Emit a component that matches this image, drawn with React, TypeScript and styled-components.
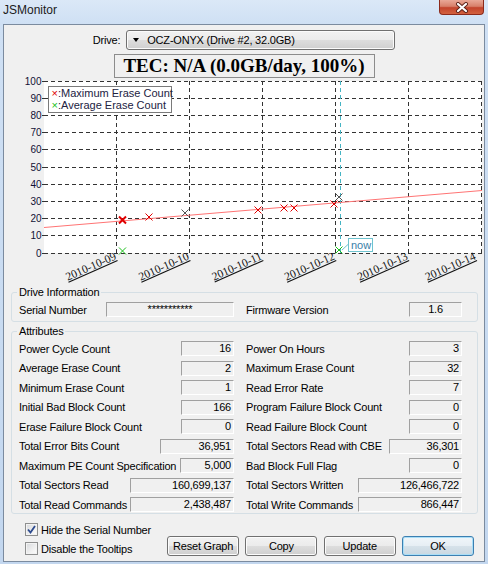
import React from 'react';
import styled, { createGlobalStyle, css } from 'styled-components';

// --------------------------------------------------------------- //
//                         Global / Window                         //
// --------------------------------------------------------------- //

const GlobalStyle = createGlobalStyle`
  html, body {
    margin: 0;
    padding: 0;
  }
  body {
    font-family: "Liberation Sans", Arial, sans-serif;
    background: #c3d7ef;
  }
`;

const Window = styled.div`
  width: 488px;
  height: 564px;
  display: flex;
  flex-direction: column;
  overflow: hidden;
  background: linear-gradient(to bottom, #dbe8f7 0px, #cfe0f4 24px, #c3d7ef 100%);
`;

const TitleBar = styled.div`
  height: 24px;
  flex-shrink: 0;
  display: flex;
  justify-content: space-between;
  align-items: flex-start;
`;

const Title = styled.span`
  padding: 2px 0 0 3px;
  font-size: 12px;
  line-height: 16px;
  color: #1b1b1b;
`;

const CloseButton = styled.div`
  width: 45px;
  height: 15px;
  margin-right: 4px;
  box-sizing: border-box;
  border: 1px solid #8c2a1b;
  border-top: none;
  border-radius: 0 0 4px 4px;
  background: linear-gradient(to bottom, #e9a897 0%, #d8806a 45%, #c3442c 55%, #d2613f 100%);
  display: flex;
  align-items: center;
  justify-content: center;
`;

const Client = styled.div`
  flex: 1;
  margin: 0 3px 2px;
  border: 1px solid #7b8b9f;
  background: #f0f0f0;
  display: flex;
  flex-direction: column;
`;

// --------------------------------------------------------------- //
//                         Header controls                         //
// --------------------------------------------------------------- //

const DriveRow = styled.div`
  margin-top: 5px;
  height: 20px;
  display: flex;
  justify-content: center;
  align-items: center;
  gap: 6px;
`;

const Text = styled.span`
  font-size: 11px;
  letter-spacing: -0.2px;
  color: #000;
  white-space: nowrap;
`;

const Combo = styled.div`
  width: 269px;
  height: 20px;
  box-sizing: border-box;
  border: 1px solid #707070;
  border-radius: 3px;
  background: linear-gradient(to bottom, #f2f2f2 0%, #ebebeb 50%, #dddddd 51%, #cfcfcf 100%);
  box-shadow: inset 0 0 0 1px #fbfbfb;
  display: flex;
  align-items: center;
  gap: 8px;
  padding-left: 6px;
`;

const ComboArrow = styled.span`
  width: 0;
  height: 0;
  border-left: 3.5px solid transparent;
  border-right: 3.5px solid transparent;
  border-top: 4px solid #000;
`;

const TecBox = styled.div`
  width: 261px;
  height: 24px;
  box-sizing: border-box;
  margin: 4px auto 0;
  border: 1px solid #8c8c8c;
  font-family: "Liberation Serif", "Times New Roman", serif;
  font-weight: bold;
  font-size: 19px;
  line-height: 22px;
  text-align: center;
  color: #000;
`;

// --------------------------------------------------------------- //
//                              Chart                              //
// --------------------------------------------------------------- //

const ChartSvg = styled.svg`
  display: block;
  flex-shrink: 0;
  margin-top: -5px;
`;

const AxisText = styled.text`
  font-family: "Liberation Sans", Arial, sans-serif;
  font-size: 10px;
  fill: #101035;
`;

const LegendText = styled.text`
  font-family: "Liberation Sans", Arial, sans-serif;
  font-size: 11px;
  fill: #22223f;
`;

const DateText = styled.text`
  font-family: "Liberation Serif", "Times New Roman", serif;
  font-size: 11.5px;
  fill: #111;
  text-decoration: underline;
`;

const OFF = 5;
const PLOT_LEFT = 40;
const PLOT_RIGHT = 478;
const PLOT_TOP = 3 + OFF;
const PLOT_BOTTOM = 175 + OFF;
const DAY_W = 72.9;

const dayX = (d: number) => PLOT_LEFT + d * DAY_W;
const valY = (v: number) => PLOT_BOTTOM - v * ((PLOT_BOTTOM - PLOT_TOP) / 100);
const crisp = (n: number) => Math.floor(n) + 0.5;

const maxMarks = [
  { x: 118.5, y: 142, bold: true },
  { x: 145, y: 139 },
  { x: 181, y: 135, dim: true },
  { x: 254, y: 132 },
  { x: 280, y: 130 },
  { x: 290, y: 130 },
  { x: 330, y: 126 },
  { x: 335, y: 119, dim: true },
];

const avgMarks = [
  { x: 118.5, y: 173 },
  { x: 335, y: 172 },
];

const Cross = ({ x, y, color, w = 1 }: { x: number; y: number; color: string; w?: number }) => (
  <path
    d={`M${x - 3.5} ${y - 3.5}L${x + 3.5} ${y + 3.5}M${x + 3.5} ${y - 3.5}L${x - 3.5} ${y + 3.5}`}
    stroke={color}
    strokeWidth={w}
    fill="none"
  />
);

const Chart = () => {
  const values = Array.from({ length: 11 }, (_, i) => i * 10);
  const days = [1, 2, 3, 4, 5, 6];
  return (
    <ChartSvg width={480} height={208 + OFF}>
      <rect x={PLOT_LEFT} y={PLOT_TOP} width={PLOT_RIGHT - PLOT_LEFT} height={PLOT_BOTTOM - PLOT_TOP} fill="#fff" />

      {values.map((v) => (
        <g key={v}>
          <line
            x1={PLOT_LEFT}
            x2={PLOT_RIGHT}
            y1={crisp(valY(v))}
            y2={crisp(valY(v))}
            stroke="#333"
            strokeDasharray="4 3"
          />
          <line x1={38} x2={PLOT_LEFT} y1={crisp(valY(v))} y2={crisp(valY(v))} stroke="#333" />
          <AxisText x={37.5} y={valY(v) + 3.5} textAnchor="end">{v}</AxisText>
        </g>
      ))}

      {days.map((d) => (
        <line
          key={d}
          x1={crisp(dayX(d))}
          x2={crisp(dayX(d))}
          y1={PLOT_TOP}
          y2={PLOT_BOTTOM}
          stroke="#333"
          strokeDasharray="4 3"
        />
      ))}

      {days.map((d) => (
        <DateText
          key={d}
          textAnchor="end"
          transform={`translate(${dayX(d) - (d === 6 ? 5 : 0)} ${181 + OFF}) rotate(-24)`}
        >
          {`2010-10-${String(8 + d).padStart(2, '0')}`}
        </DateText>
      ))}

      <line x1={336.5} x2={336.5} y1={PLOT_TOP} y2={PLOT_BOTTOM} stroke="#44b4c4" strokeDasharray="4 3" />

      <line x1={PLOT_LEFT} y1={149.5 + OFF} x2={PLOT_RIGHT} y2={112.5 + OFF} stroke="#ff7474" />

      {maxMarks.map((m) => (
        <Cross key={`${m.x}-${m.y}`} x={m.x} y={m.y + OFF} color={m.dim ? '#555' : '#e00000'} w={m.bold ? 2 : 1} />
      ))}
      {avgMarks.map((m) => (
        <Cross key={`${m.x}-${m.y}`} x={m.x} y={m.y + OFF} color="#18c018" />
      ))}

      <line x1={338} y1={172 + OFF} x2={344.5} y2={166 + OFF} stroke="#6ec3cf" />
      <rect x={344.5} y={160.5 + OFF} width={24} height={13} fill="#fff" stroke="#6ec3cf" />
      <LegendText x={347} y={171 + OFF} style={{ fill: '#3b7fa8' }}>now</LegendText>

      <rect x={44.5} y={8.5 + OFF} width={123} height={26} fill="#fff" stroke="#7a7a7a" />
      <LegendText x={47.5} y={19 + OFF}>
        <tspan fill="#e00000">×</tspan>:Maximum Erase Count
      </LegendText>
      <LegendText x={47.5} y={31 + OFF}>
        <tspan fill="#18c018">×</tspan>:Average Erase Count
      </LegendText>
    </ChartSvg>
  );
};

// --------------------------------------------------------------- //
//                         Group boxes                             //
// --------------------------------------------------------------- //

const Group = styled.fieldset<{ $top: number; $pb: number }>`
  margin: ${(p) => p.$top}px 6px 0 7px;
  padding: 3px 14px ${(p) => p.$pb}px 7px;
  border: 1px solid #d5dfe5;
  border-radius: 3px;
  min-width: 0;
`;

const GroupTitle = styled.legend`
  padding: 0 2px;
  margin-left: -2px;
  font-size: 11px;
  line-height: 13px;
  letter-spacing: -0.2px;
  color: #000;
`;

const Grid = styled.div`
  display: grid;
  grid-template-columns: 215px 216px;
  column-gap: 12px;
  row-gap: 4.5px;
`;

const Cell = styled.div`
  height: 15px;
  display: flex;
  align-items: center;
  justify-content: space-between;
`;

const Field = styled.div<{ $w: number; $center?: boolean }>`
  width: ${(p) => p.$w}px;
  height: 15px;
  box-sizing: border-box;
  border-top: 1px solid #a0a0a0;
  border-left: 1px solid #a0a0a0;
  border-right: 1px solid #fff;
  border-bottom: 1px solid #fff;
  padding: 0 2px;
  font-size: 11px;
  line-height: 13px;
  letter-spacing: -0.2px;
  color: #000;
  white-space: nowrap;
  text-align: ${(p) => (p.$center ? 'center' : 'right')};
`;

interface AttrItem {
  label: string;
  value: string;
  width: number;
}

const attributes: AttrItem[] = [
  { label: 'Power Cycle Count', value: '16', width: 53 },
  { label: 'Power On Hours', value: '3', width: 53 },
  { label: 'Average Erase Count', value: '2', width: 53 },
  { label: 'Maximum Erase Count', value: '32', width: 53 },
  { label: 'Minimum Erase Count', value: '1', width: 53 },
  { label: 'Read Error Rate', value: '7', width: 53 },
  { label: 'Initial Bad Block Count', value: '166', width: 53 },
  { label: 'Program Failure Block Count', value: '0', width: 53 },
  { label: 'Erase Failure Block Count', value: '0', width: 53 },
  { label: 'Read Failure Block Count', value: '0', width: 53 },
  { label: 'Total Error Bits Count', value: '36,951', width: 74 },
  { label: 'Total Sectors Read with CBE', value: '36,301', width: 73 },
  { label: 'Maximum PE Count Specification', value: '5,000', width: 54 },
  { label: 'Bad Block Full Flag', value: '0', width: 53 },
  { label: 'Total Sectors Read', value: '160,699,137', width: 104 },
  { label: 'Total Sectors Written', value: '126,466,722', width: 104 },
  { label: 'Total Read Commands', value: '2,438,487', width: 104 },
  { label: 'Total Write Commands', value: '866,447', width: 104 },
];

// --------------------------------------------------------------- //
//                              Footer                             //
// --------------------------------------------------------------- //

const Footer = styled.div`
  margin: 8px 10px 0 21px;
  display: flex;
  justify-content: space-between;
  align-items: flex-end;
`;

const CheckList = styled.div`
  display: flex;
  flex-direction: column;
  gap: 4px;
`;

const CheckRow = styled.label`
  height: 15px;
  display: flex;
  align-items: center;
  gap: 3px;
`;

const CheckBox = styled.span`
  width: 13px;
  height: 13px;
  box-sizing: border-box;
  border: 1px solid #8e8f8f;
  background: linear-gradient(135deg, #d6d8db 0%, #f4f4f4 70%, #fdfdfd 100%);
  box-shadow: inset 0 0 0 1px #f3f3f3;
  display: flex;
  align-items: center;
  justify-content: center;
`;

const ButtonRow = styled.div`
  display: flex;
  gap: 6.3px;
`;

const Button = styled.button<{ $default?: boolean }>`
  width: 72px;
  height: 20px;
  padding: 0;
  border: 1px solid #707070;
  border-radius: 3px;
  background: linear-gradient(to bottom, #f2f2f2 0%, #ebebeb 50%, #dddddd 51%, #cfcfcf 100%);
  box-shadow: inset 0 0 0 1px #fcfcfc;
  font-family: "Liberation Sans", Arial, sans-serif;
  font-size: 11px;
  letter-spacing: -0.2px;
  color: #000;
  ${(p) => p.$default && css`
    border-color: #3c7fb1;
    box-shadow: inset 0 0 0 1px #a9def7;
    background: linear-gradient(to bottom, #f0f6fa 0%, #e6eef4 50%, #d6e2ea 51%, #c9d7e1 100%);
  `}
`;

const CheckMark = () => (
  <svg width={9} height={9} viewBox="0 0 9 9">
    <path d="M1 4.5 L3.5 7.5 L8 1" stroke="#2c4a8e" strokeWidth={1.8} fill="none" />
  </svg>
);

// --------------------------------------------------------------- //
//                          Main Component                         //
// --------------------------------------------------------------- //

export default function App() {
  return (
    <>
      <GlobalStyle />
      <Window>
        <TitleBar>
          <Title>JSMonitor</Title>
          <CloseButton>
            <svg width={14} height={11} viewBox="0 0 14 11">
              <path d="M3 2 L11 9 M11 2 L3 9" stroke="#5a2118" strokeWidth={4} strokeLinecap="round" />
              <path d="M3 2 L11 9 M11 2 L3 9" stroke="#fff" strokeWidth={2.2} strokeLinecap="round" />
            </svg>
          </CloseButton>
        </TitleBar>

        <Client>
          <DriveRow>
            <Text>Drive:</Text>
            <Combo>
              <ComboArrow />
              <Text>OCZ-ONYX (Drive #2, 32.0GB)</Text>
            </Combo>
          </DriveRow>

          <TecBox>TEC: N/A (0.0GB/day, 100%)</TecBox>

          <Chart />

          <Group $top={0} $pb={4}>
            <GroupTitle>Drive Information</GroupTitle>
            <Grid>
              <Cell>
                <Text>Serial Number</Text>
                <Field $w={128} $center>***********</Field>
              </Cell>
              <Cell>
                <Text>Firmware Version</Text>
                <Field $w={53} $center>1.6</Field>
              </Cell>
            </Grid>
          </Group>

          <Group $top={3} $pb={1}>
            <GroupTitle>Attributes</GroupTitle>
            <Grid>
              {attributes.map((a) => (
                <Cell key={a.label}>
                  <Text>{a.label}</Text>
                  <Field $w={a.width}>{a.value}</Field>
                </Cell>
              ))}
            </Grid>
          </Group>

          <Footer>
            <CheckList>
              <CheckRow>
                <CheckBox><CheckMark /></CheckBox>
                <Text>Hide the Serial Number</Text>
              </CheckRow>
              <CheckRow>
                <CheckBox />
                <Text>Disable the Tooltips</Text>
              </CheckRow>
            </CheckList>
            <ButtonRow>
              <Button>Reset Graph</Button>
              <Button>Copy</Button>
              <Button>Update</Button>
              <Button $default>OK</Button>
            </ButtonRow>
          </Footer>
        </Client>
      </Window>
    </>
  );
}
